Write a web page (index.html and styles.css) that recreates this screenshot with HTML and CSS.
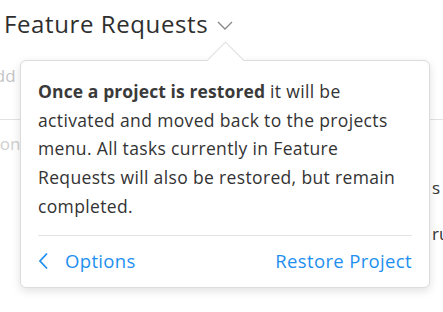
FILE: index.html
```html
<!DOCTYPE html>
<html>
<head>
<meta charset="utf-8">
<link rel="stylesheet" href="styles.css">
</head>
<body>
<div class="page">
  <header class="title-bar">
    <h1 class="title">Feature Requests</h1>
    <svg class="title-chevron" width="16" height="9" viewBox="0 0 16 9"><path d="M1 1 L8 8 L15 1" fill="none" stroke="#8a8a8a" stroke-width="1.4"/></svg>
  </header>
  <div class="bg-list">
    <div class="bg-add">Add task</div>
    <div class="bg-rule"></div>
    <div class="bg-section">Concluded</div>
    <div class="bg-row bg-row-s">s due</div>
    <div class="bg-row bg-row-ru">run</div>
  </div>

  <div class="popover">
    <div class="popover-arrow"></div>
    <p class="popover-text"><strong>Once a project is restored</strong> it will be activated and moved back to the projects menu. All tasks currently in Feature Requests will also be restored, but remain completed.</p>
    <div class="popover-sep"></div>
    <div class="popover-footer">
      <a class="link back-link"><svg class="back-chevron" width="11" height="18" viewBox="0 0 11 18"><path d="M9 1.5 L2 9 L9 16.5" fill="none" stroke="#1e8ff0" stroke-width="1.8"/></svg>Options</a>
      <a class="link">Restore Project</a>
    </div>
  </div>
</div>
</body>
</html>
```
FILE: styles.css
```css
html, body {
  margin: 0;
  padding: 0;
  background: #fff;
}
.page {
  position: relative;
  width: 443px;
  height: 312px;
  overflow: hidden;
  font-family: "Open Sans", "Lato", sans-serif;
  color: #333;
}
.title-bar {
  display: flex;
  align-items: center;
  gap: 9px;
  padding: 8px 0 0 4px;
  height: 40px;
  box-sizing: border-box;
}
.title {
  margin: 0;
  font-size: 24px;
  letter-spacing: 0.6px;
  font-weight: 400;
  color: #2e2e2e;
  line-height: 30px;
}
.title-chevron {
  margin-top: 3px;
}
.bg-list {
  color: #c4c4c4;
  font-size: 17px;
}
.bg-add {
  margin: 25px 0 0 -16px;
  line-height: 22px;
}
.bg-rule {
  margin-top: 32px;
  border-top: 1px solid #e2e2e2;
}
.bg-section {
  margin: 13px 0 0 -11px;
  line-height: 22px;
  color: #cfcfcf;
  white-space: nowrap;
}
.bg-row {
  color: #333;
  line-height: 22px;
  padding-left: 432px;
  white-space: nowrap;
}
.bg-row-s {
  margin-top: 22px;
}
.bg-row-ru {
  margin-top: 24px;
}
.popover {
  position: absolute;
  left: 20px;
  top: 60px;
  width: 410px;
  height: 228px;
  box-sizing: border-box;
  background: #fff;
  border: 1px solid #dcdcdc;
  border-radius: 6px;
  box-shadow: 0 3px 10px rgba(0,0,0,0.12);
  padding: 16px 17px 0 17px;
}
.popover-arrow {
  position: absolute;
  left: 191px;
  top: -14px;
  width: 26px;
  height: 26px;
  background: #fff;
  border-left: 1px solid #dcdcdc;
  border-top: 1px solid #dcdcdc;
  transform: rotate(45deg);
}
.popover-text {
  position: relative;
  margin: 0;
  font-size: 17.5px;
  letter-spacing: 0.35px;
  line-height: 28.7px;
  color: #333;
}
.popover-text strong {
  font-weight: 700;
  letter-spacing: 0.1px;
  color: #3a3a3a;
}
.popover-sep {
  margin-top: 14px;
  border-top: 1px solid #e4e4e4;
}
.popover-footer {
  display: flex;
  justify-content: space-between;
  align-items: center;
  height: 50px;
}
.link {
  color: #1e8ff0;
  font-size: 18.5px;
  letter-spacing: 0.35px;
  display: flex;
  align-items: center;
}
.back-chevron {
  margin-right: 16px;
}
```
